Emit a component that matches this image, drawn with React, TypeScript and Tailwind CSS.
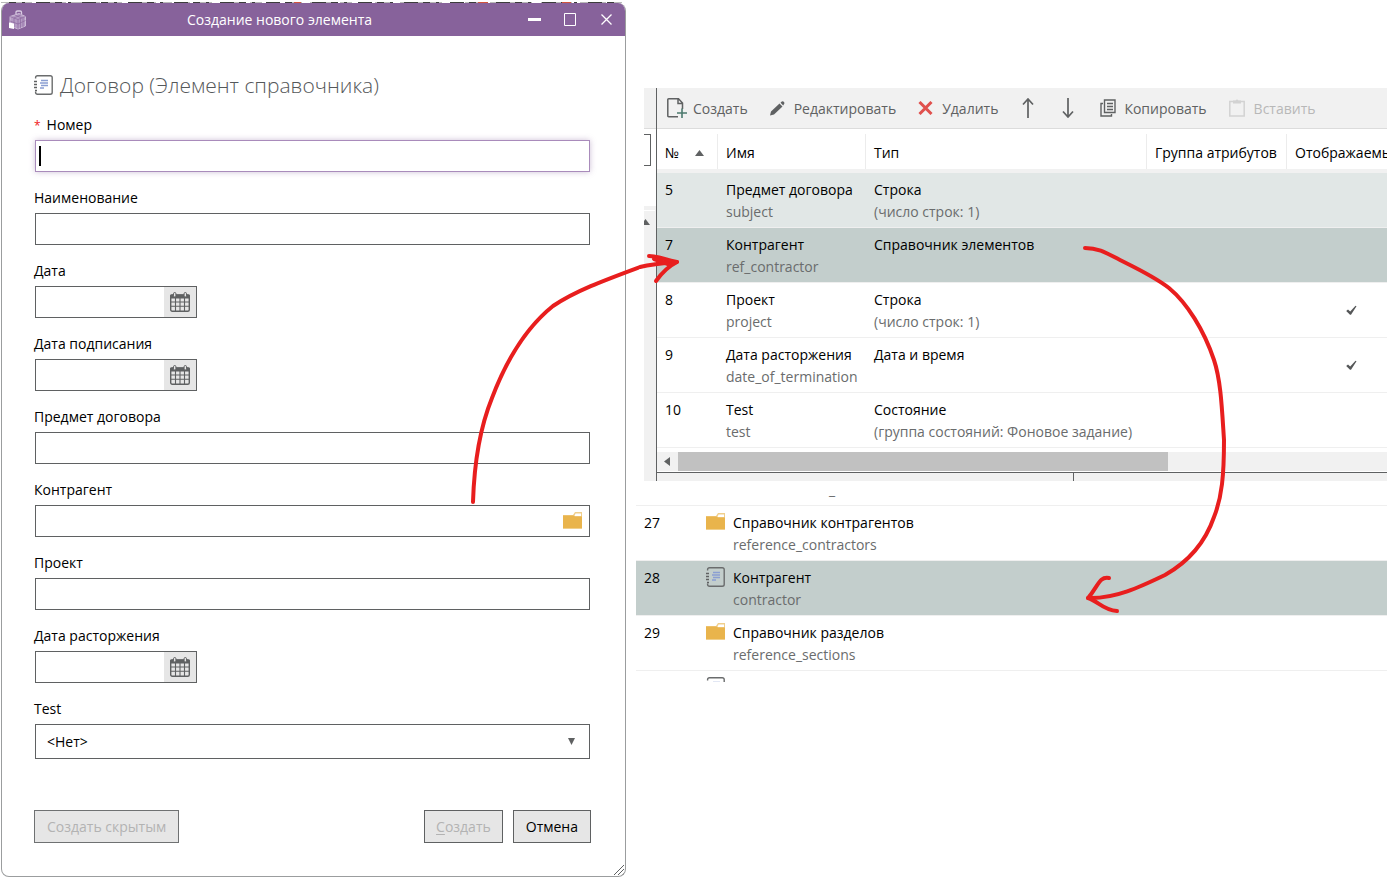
import React from "react";

const NotebookIcon = () => (
  <svg width="19" height="20" viewBox="0 0 19 20" fill="none" aria-hidden="true" className="shrink-0">
    <path d="M1.600 3.500V2.500q0-1.800 1.900-1.800h12.700q2 0 2 1.800v15q0 1.800-2 1.800H3.500q-1.900 0-1.900-1.800V16.500" stroke="#6a6c6d" strokeWidth="1.400" />
    <path d="M0 6.500h3M0 9.500h3M0 12.500h3M1 15.500h2" stroke="#5f6162" strokeWidth="1.300" />
    <path d="M7 5.500h7M6 8h8M7 10.500h7M6 13h4" stroke="#8a9fd2" strokeWidth="1.500" />
  </svg>
);

const FolderIcon = () => (
  <svg width="19" height="18" viewBox="0 0 19 18" aria-hidden="true" className="shrink-0">
    <path d="M0 3h10l2-3h7v17H0z" fill="#f0cf8c" />
    <path d="M12.500 1.500H18V4h-6.500z" fill="#fff" />
    <path d="M0 3.500h10.500L12 4.500h7V16H0z" fill="#e9b44c" />
  </svg>
);

const CalendarIcon = () => (
  <svg width="20" height="20" viewBox="0 0 20 20" fill="none" aria-hidden="true">
    <rect x="0.700" y="3" width="18.600" height="16.300" rx="1.500" stroke="#5f6162" strokeWidth="1.400" />
    <path d="M0 3.500q0-1 1.500-1h17q1.500 0 1.500 1V6.500H0z" fill="#5f6162" />
    <path d="M5.500 6v13M10 6v13M14.500 6v13M1 10h18M1 14.300h18" stroke="#5f6162" strokeWidth="1.100" />
    <rect x="3.500" y="0.500" width="2.400" height="4.500" rx="1.200" fill="#e6e6e6" stroke="#5f6162" />
    <rect x="14.100" y="0.500" width="2.400" height="4.500" rx="1.200" fill="#e6e6e6" stroke="#5f6162" />
  </svg>
);

const CubeIcon = () => (
  <svg width="18" height="20" viewBox="0 0 18 20" fill="none" aria-hidden="true">
    <path d="M1 6.500 10 3.500l6.500 3v9.500L9 19 1 16z" fill="#b49bc3" stroke="#d9cce2" strokeWidth="0.800" />
    <path d="M1 6.500 9 9.500l7.500-3M9 9.500V19M1 11l8 3 7.500-3.500M5 8v9.500M11.500 8.500V18M14 7.500V17M6 5l7 3M12.500 4.500 5 8" stroke="#87629b" strokeWidth="0.600" />
    <path d="M7 4.500V2q0-1 1.500-1h2.500q1.500 0 1.500 1v2.500" stroke="#d9cce2" strokeWidth="1.300" />
    <path d="M0 12.500 5 13.500V19L0 18z" fill="#fff" />
  </svg>
);

const CheckMark = () => (
  <svg width="11" height="11" viewBox="0 0 11 11" role="img" aria-label="Да" className="mx-auto">
    <path d="M0.200 6 2 4.500 4.200 6.500 9.500.7 10.500 1.200 5 9.700H4z" fill="#555758" />
  </svg>
);

function Field({ id, label, children }: { id: string; label: string; children: React.ReactNode }) {
  return (
    <div className="flex flex-col gap-[3px]">
      <label htmlFor={id} className="leading-6">{label}</label>
      {children}
    </div>
  );
}

function TextField({ id, label }: { id: string; label: string }) {
  return (
    <Field id={id} label={label}>
      <input id={id} type="text" className="mx-px h-8 border border-[#5f6162] bg-white px-2 outline-none" />
    </Field>
  );
}

function DateField({ id, label }: { id: string; label: string }) {
  return (
    <Field id={id} label={label}>
      <div className="mx-px flex h-8 w-[162px] border border-[#5f6162]">
        <input id={id} type="text" className="min-w-0 flex-1 bg-white px-2 outline-none" />
        <button type="button" aria-label="Календарь" className="flex w-8 items-center justify-center bg-[#e6e6e6]">
          <CalendarIcon />
        </button>
      </div>
    </Field>
  );
}

function Dialog() {
  return (
    <section className="overflow-hidden rounded-lg border border-t-0 border-[#9b9d9e] bg-white">
      <header className="-mx-px flex h-[33px] items-center bg-[#87629b] pr-[2px] pl-2 text-white">
        <CubeIcon />
        <h1 className="flex-1 pl-4 text-center">Создание нового элемента</h1>
        <button type="button" aria-label="Свернуть" className="flex h-full w-9 items-center justify-center">
          <svg width="13" height="3"><path d="M0 1.500h13" stroke="#fff" strokeWidth="3" /></svg>
        </button>
        <button type="button" aria-label="Развернуть" className="flex h-full w-9 items-center justify-center">
          <svg width="12" height="13" fill="none"><path d="M.5.5h11v12H.5z" stroke="#fff" /></svg>
        </button>
        <button type="button" aria-label="Закрыть" className="flex h-full w-9 items-center justify-center">
          <svg width="11" height="11" fill="none"><path d="m.5.5 10 10m0-10-10 10" stroke="#fff" strokeWidth="1.300" /></svg>
        </button>
      </header>
      <form className="relative pt-[33px] pr-[34px] pb-[33px] pl-8">
        <h2 className="mb-3 flex items-center gap-[7px] text-[21px] leading-8 font-light text-[#55585a]">
          <NotebookIcon />
          Договор (Элемент справочника)
        </h2>
        <div className="flex flex-col gap-[14px]">
          <div className="flex flex-col gap-[3px]">
            <label htmlFor="number" className="h-6 leading-6"><span className="mr-[6px] text-[12px] text-[#f01818]">*</span>Номер</label>
            <div className="mx-px flex h-8 items-center border border-[#a98bbb] pl-[3px] shadow-[0_0_6px_#87629b66]">
              <span className="h-5 w-[2px] bg-black" />
              <input id="number" type="text" className="h-full flex-1 outline-none" />
            </div>
          </div>
          <TextField id="name" label="Наименование" />
          <DateField id="date" label="Дата" />
          <DateField id="signed" label="Дата подписания" />
          <TextField id="subject" label="Предмет договора" />
          <Field id="contractor" label="Контрагент">
            <div className="mx-px flex h-8 items-center border border-[#5f6162] pr-[7px]">
              <input id="contractor" type="text" className="h-full min-w-0 flex-1 px-2 outline-none" />
              <button type="button" aria-label="Выбрать"><FolderIcon /></button>
            </div>
          </Field>
          <TextField id="project" label="Проект" />
          <DateField id="termination" label="Дата расторжения" />
          <Field id="test" label="Test">
            <div className="relative mx-px flex">
              <select id="test" className="h-[35px] w-full appearance-none border border-[#5f6162] bg-white px-[11px] outline-none">
                <option>&lt;Нет&gt;</option>
              </select>
              <svg width="7" height="7" className="pointer-events-none absolute top-[14px] right-[15px]"><path d="M0 0h7L3.500 7z" fill="#5f6162" /></svg>
            </div>
          </Field>
        </div>
        <div className="mt-[51px] flex justify-between">
          <button type="button" disabled className="h-[33px] border border-[#6f7172] bg-[#e6e6e6] px-3 text-[#b3b3b3]">Создать скрытым</button>
          <div className="flex gap-[10px]">
            <button type="button" disabled className="h-[33px] border border-[#5f6162] bg-[#e6e6e6] px-[11px] text-[#b3b3b3]"><span className="underline underline-offset-2">С</span>оздать</button>
            <button type="button" className="h-[33px] border border-[#5f6162] bg-[#e6e6e6] px-3">Отмена</button>
          </div>
        </div>
        <svg width="11" height="11" className="absolute right-0 bottom-0" aria-hidden="true"><path d="M0 10 10 0M4 10l6-6M7 11l4-4" stroke="#5f6162" /></svg>
      </form>
    </section>
  );
}

function Toolbar() {
  const item = "flex items-center";
  return (
    <div className="flex h-[41px] items-center overflow-hidden border-b border-[#dcdcdc] bg-[#f1f1f1] pl-[10px] whitespace-nowrap text-[#5f6162]">
      <button type="button" className={`${item} mr-[22px] gap-[6px]`}>
        <svg width="20" height="20" fill="none" className="shrink-0"><path d="M11 18.700H1.700q-.9 0-.9-.9V1.700q0-.9.9-.9H11.500L15.500 5V11M11 1v4.500h4.500" stroke="#5f6162" strokeWidth="1.500" /><path d="M15 10.500v9.500M10 15h10" stroke="#4c7a6e" strokeWidth="1.600" /></svg>
        Создать
      </button>
      <button type="button" className={`${item} mr-[22px] gap-[9px]`}>
        <svg width="15" height="15" className="shrink-0"><path d="M0 14.500 1 10.500 9.500 2.500 12.500 5.500 4 13.500zM10.500 1.700 11.800.5q1-.8 2 .2t.4 2L13.200 4.500z" fill="#5f6162" /></svg>
        Редактировать
      </button>
      <button type="button" className={`${item} mr-[24px] gap-[9px]`}>
        <svg width="15" height="14" fill="none" className="shrink-0"><path d="M1.500 1 13.500 13M13.500 1 1.500 13" stroke="#e0504d" strokeWidth="3" /></svg>
        Удалить
      </button>
      <button type="button" aria-label="Вверх" className="mr-7">
        <svg width="12" height="20" fill="none"><path d="M6 20V1M1 6.500 6 1l5 5.500" stroke="#5f6162" strokeWidth="1.700" /></svg>
      </button>
      <button type="button" aria-label="Вниз" className="mr-[26px]">
        <svg width="12" height="20" fill="none"><path d="M6 0v19M1 13.500 6 19l5-5.500" stroke="#5f6162" strokeWidth="1.700" /></svg>
      </button>
      <button type="button" className={`${item} mr-[22px] gap-2`}>
        <svg width="16" height="18" fill="none" className="shrink-0"><path d="M4.500 1h10.500v12.500H4.500zM3 4.500H1V17h10.500v-2M7 4.500h6M7 7.500h6M7 10.500h6" stroke="#5f6162" strokeWidth="1.400" /></svg>
        Копировать
      </button>
      <button type="button" disabled className={`${item} gap-[9px] text-[#b8b8b8]`}>
        <svg width="16" height="18" fill="none" className="shrink-0"><path d="M.8 2.500h14.400v14.500H.8z" stroke="#d2d2d2" strokeWidth="1.500" /><path d="M4 1.500h2.500q1.500-2 3 0H12v3H4z" fill="#d2d2d2" /></svg>
        Вставить
      </button>
    </div>
  );
}

const attributes = [
  { no: 5, name: "Предмет договора", code: "subject", type: "Строка", note: "(число строк: 1)", shown: false, bg: "bg-[#e1e7e6]" },
  { no: 7, name: "Контрагент", code: "ref_contractor", type: "Справочник элементов", note: "", shown: false, bg: "bg-[#c3cecc]" },
  { no: 8, name: "Проект", code: "project", type: "Строка", note: "(число строк: 1)", shown: true, bg: "bg-white" },
  { no: 9, name: "Дата расторжения", code: "date_of_termination", type: "Дата и время", note: "", shown: true, bg: "bg-white" },
  { no: 10, name: "Test", code: "test", type: "Состояние", note: "(группа состояний: Фоновое задание)", shown: false, bg: "bg-white" },
];

function AttributeTable() {
  const head = "border-r border-[#ececec] pt-[2px] pl-2 text-left font-normal";
  return (
    <table className="mt-[5px] mb-1 w-full table-fixed border-separate border-spacing-0 whitespace-nowrap">
      <colgroup>
        <col className="w-[61px]" />
        <col className="w-[148px]" />
        <col className="w-[281px]" />
        <col className="w-[140px]" />
        <col />
      </colgroup>
      <thead>
        <tr className="h-[35px]">
          <th className={head}>
            <span className="flex items-center gap-4">№<svg width="9" height="6"><path d="M0 6 4.500 0 9 6z" fill="#5f6162" /></svg></span>
          </th>
          <th className={head}>Имя</th>
          <th className={head}>Тип</th>
          <th className={head}>Группа атрибутов</th>
          <th className="overflow-hidden pt-[2px] pl-2 text-left font-normal">Отображаемый</th>
        </tr>
        <tr className="h-1 bg-[#f1f1f1]"><td colSpan={5} className="p-0" /></tr>
      </thead>
      <tbody className="leading-[22px]">
        {attributes.map((a) => (
          <tr key={a.no} className={`h-[55px] align-top ${a.bg}`}>
            <td className="border-b border-[#efefef] pt-[6px] pl-2">{a.no}</td>
            <td className="border-b border-[#efefef] pt-[6px] pl-2">{a.name}<div className="text-[#6a6c6d]">{a.code}</div></td>
            <td className="border-b border-[#efefef] pt-[6px] pl-2">{a.type}<div className="text-[#6a6c6d]">{a.note}</div></td>
            <td className="border-b border-[#efefef]" />
            <td className="border-b border-[#efefef] align-middle"><div className="w-32">{a.shown && <CheckMark />}</div></td>
          </tr>
        ))}
      </tbody>
    </table>
  );
}

function AttributePanel() {
  return (
    <section className="mt-[88px] ml-[18px] flex overflow-hidden">
      <div className="flex w-3 shrink-0 flex-col" aria-hidden="true">
        <div className="h-[41px] border-b border-[#dcdcdc] bg-[#f1f1f1]" />
        <div className="mt-[5px] mr-[5px] h-8 border border-l-0 border-[#5f6162]" />
        <div className="mt-10 flex-1 bg-[#f1f1f1]">
          <div className="mt-1 mr-px border-t border-white pt-2">
            <svg width="6" height="6"><path d="M-3 6 1.500 0 6 6z" fill="#5f6162" /></svg>
          </div>
        </div>
      </div>
      <div className="min-w-0 flex-1 border-l border-[#5f6162]">
        <Toolbar />
        <AttributeTable />
        <div className="flex h-[19px] items-center bg-[#f1f1f1]" aria-hidden="true">
          <svg width="21" height="9"><path d="M13 0v9L7 4.500z" fill="#5f6162" /></svg>
          <div className="h-full w-[67.1%] bg-[#c1c1c1]" />
        </div>
        <div className="mt-px flex h-[9px] border-t border-[#5f6162] bg-[#f1f1f1]">
          <div className="w-[57.1%] border-r border-[#5f6162]" />
        </div>
      </div>
    </section>
  );
}

const references = [
  { no: 27, name: "Справочник контрагентов", code: "reference_contractors", folder: true, bg: "" },
  { no: 28, name: "Контрагент", code: "contractor", folder: false, bg: "bg-[#c3cecc]" },
  { no: 29, name: "Справочник разделов", code: "reference_sections", folder: true, bg: "" },
];

function ReferenceList() {
  return (
    <section className="ml-[10px] flex flex-col leading-[22px]">
      <div className="flex h-[25px] items-end border-b border-[#efefef] pb-[7px] pl-[193px] leading-4 text-[#6a6c6d]">_</div>
      {references.map((r) => (
        <div key={r.no} className={`flex h-[55px] items-start border-b border-[#efefef] pt-[6px] pl-2 ${r.bg}`}>
          <span className="w-[62px]">{r.no}</span>
          <span className="flex h-5 w-[27px] items-center">{r.folder ? <FolderIcon /> : <NotebookIcon />}</span>
          <div>{r.name}<div className="text-[#6a6c6d]">{r.code}</div></div>
        </div>
      ))}
      <div className="h-[11px] overflow-hidden pt-[6px] pl-[70px]"><NotebookIcon /></div>
    </section>
  );
}

const Arrows = () => (
  <svg width="1387" height="879" fill="none" stroke="#e81e1e" strokeWidth="4" strokeLinecap="round" strokeLinejoin="round" className="pointer-events-none absolute top-0 left-0" aria-hidden="true">
    <path d="M473 502C474 470 479 430 492 398 508 356 528 326 553 306 575 291 605 280 640 267 652 264 664 263 677 262" />
    <path d="M649 256C658 256 665 260 677 262 667 267 661 274 656 281" />
    <path d="M654 259 668 264" />
    <path d="M1085 248C1100 248 1108 254 1120 260 1140 270 1155 277 1169 288 1187 303 1204 330 1214 360 1221 381 1222 410 1224 440 1224 475 1222 497 1214 517 1205 543 1188 562 1165 575 1140 587 1115 599 1088 598" />
    <path d="M1109 578C1099 576 1098 587 1088 598 1098 601 1103 610 1117 611" />
  </svg>
);

export default function App() {
  return (
    <main className="relative grid grid-cols-[626fr_761fr] items-start overflow-hidden bg-white pb-[2px] font-['Open_Sans','Noto_Sans',sans-serif] text-[14px] text-black">
      <div className="pl-px">
        <svg width="100%" height="3" className="block" aria-hidden="true">
          <path d="M0 2.500h625" stroke="#b9b9b9" strokeDasharray="9 5 17 8 26 4 12 9" />
          <path d="M8 2.500h610" stroke="#3c3c3c" strokeDasharray="7 6 3 11 14 5" />
          <path d="M293 2.500h7M477 2.500h10M561 2.500h9" stroke="#d2533c" />
        </svg>
        <Dialog />
      </div>
      <div className="min-w-0">
        <AttributePanel />
        <ReferenceList />
      </div>
      <Arrows />
    </main>
  );
}
